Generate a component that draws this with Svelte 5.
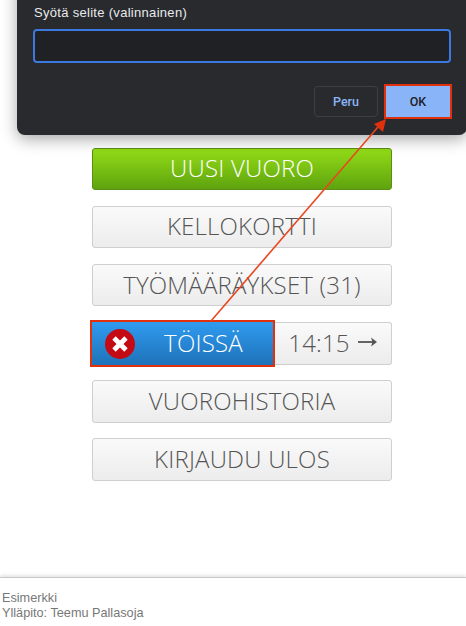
<script>
	const buttons = ["VUOROHISTORIA", "KIRJAUDU ULOS"];
</script>

<div class="page">
	<main class="menu">
		<a class="btn green" href="#uusi">UUSI VUORO</a>
		<a class="btn" href="#kello">KELLOKORTTI</a>
		<a class="btn" href="#tyo">TYÖMÄÄRÄYKSET (31)</a>
		<div class="status">
			<a class="btn blue" href="#toissa">
				<svg class="stop" viewBox="0 0 30 30" width="30" height="30">
					<circle cx="15" cy="15" r="15" fill="#c40a12" />
					<path d="M9 9 21 21M21 9 9 21" stroke="#fff" stroke-width="4.800" />
				</svg>
				TÖISSÄ
			</a>
			<a class="btn time" href="#aika">
				14:15
				<svg viewBox="0 0 19 12" width="19" height="12">
					<path d="M0 6H17" fill="none" stroke="#555" stroke-width="1.800" />
					<path d="M13 1.500 19 6 13 10.500 14.500 6Z" fill="#555" />
				</svg>
			</a>
		</div>
		{#each buttons as label}
			<a class="btn" href="#nav">{label}</a>
		{/each}
	</main>

	<footer>
		Esimerkki<br />
		Ylläpito: Teemu Pallasoja
	</footer>

	<div class="dialog">
		<label for="selite">Syötä selite (valinnainen)</label>
		<input id="selite" type="text" />
		<div class="actions">
			<button class="cancel">Peru</button>
			<button class="ok">OK</button>
		</div>
	</div>

	<!-- red annotation drawn on top of the screenshot -->
	<svg class="marks" width="466" height="626" viewBox="0 0 466 626">
		<rect x="385" y="85" width="66" height="33" fill="none" stroke="#e0300c" stroke-width="2" />
		<rect x="91" y="321" width="183" height="45" fill="none" stroke="#e0300c" stroke-width="2" />
		<path d="M211 321 378 127" stroke="#e8481f" stroke-width="1.600" fill="none" />
		<path d="M386 119 383 132 374 124Z" fill="#e0300c" />
	</svg>
</div>

<style>
	:global(body) {
		background: #fff;
	}

	.page {
		position: relative;
		width: 466px;
		height: 626px;
		overflow: hidden;
		font-family: "Open Sans", sans-serif;
	}

	.menu {
		display: flex;
		flex-direction: column;
		gap: 15.700px;
		width: 300px;
		margin-left: 92px;
		padding-top: 147.500px;
	}

	.btn {
		display: flex;
		align-items: center;
		justify-content: center;
		box-sizing: border-box;
		height: 42.500px;
		padding-bottom: 2px;
		border: 1px solid #cfcfcf;
		border-radius: 3px;
		background: linear-gradient(#fafafa, #ececec);
		color: #555;
		font-size: 24px;
		font-weight: 300;
		letter-spacing: 0.2px;
		text-decoration: none;
		white-space: nowrap;
	}

	.green {
		border-color: #5a8f14;
		background: linear-gradient(#93dc17, #5ea30e);
		color: #fff;
	}

	.status {
		display: flex;
	}

	.blue {
		position: relative;
		width: 182px;
		border: none;
		border-radius: 0;
		background: linear-gradient(#2f9bf0, #1f72b8);
		color: #fff;
		padding-left: 41px;
	}

	.stop {
		position: absolute;
		left: 13px;
		top: 7px;
	}

	.time {
		flex: 1;
		gap: 8px;
		border-left: none;
		border-radius: 0 3px 3px 0;
	}

	footer {
		position: absolute;
		left: 0;
		right: 0;
		top: 577px;
		height: 49px;
		box-sizing: border-box;
		padding: 13px 2px 0;
		border-top: 1px solid #c8c8c8;
		box-shadow: 0 -2px 3px rgba(0, 0, 0, 0.1);
		background: #fff;
		color: #777;
		font-family: "Liberation Sans", sans-serif;
		font-size: 12.700px;
		line-height: 15px;
	}

	.dialog {
		position: absolute;
		top: -20px;
		left: 17px;
		width: 450px;
		height: 155px;
		box-sizing: border-box;
		padding: 25px 16px 0;
		border-radius: 8px;
		background: #292a2d;
		box-shadow: 0 4px 16px rgba(0, 0, 0, 0.35);
		font-family: "Liberation Sans", sans-serif;
	}

	label {
		display: block;
		padding-left: 1px;
		color: #e8eaed;
		font-size: 13px;
		line-height: 15px;
		letter-spacing: 0.3px;
	}

	input {
		display: block;
		box-sizing: border-box;
		width: 100%;
		height: 34px;
		margin-top: 9px;
		border: 2px solid #3b78e0;
		border-radius: 4px;
		background: #202124;
		outline: none;
	}

	.actions {
		display: flex;
		justify-content: flex-end;
		align-items: center;
		gap: 7px;
		margin-top: 22px;
	}

	button {
		box-sizing: border-box;
		border-radius: 4px;
		font-family: Roboto, sans-serif;
		font-size: 12.500px;
		font-weight: 500;
	}

	.cancel {
		width: 64px;
		height: 31px;
		border: 1px solid #3c4043;
		background: transparent;
		color: #8ab4f8;
	}

	.ok {
		width: 66px;
		height: 33px;
		border: none;
		background: #8ab4f8;
		color: #202124;
	}

	.marks {
		position: absolute;
		inset: 0;
		pointer-events: none;
	}
</style>
